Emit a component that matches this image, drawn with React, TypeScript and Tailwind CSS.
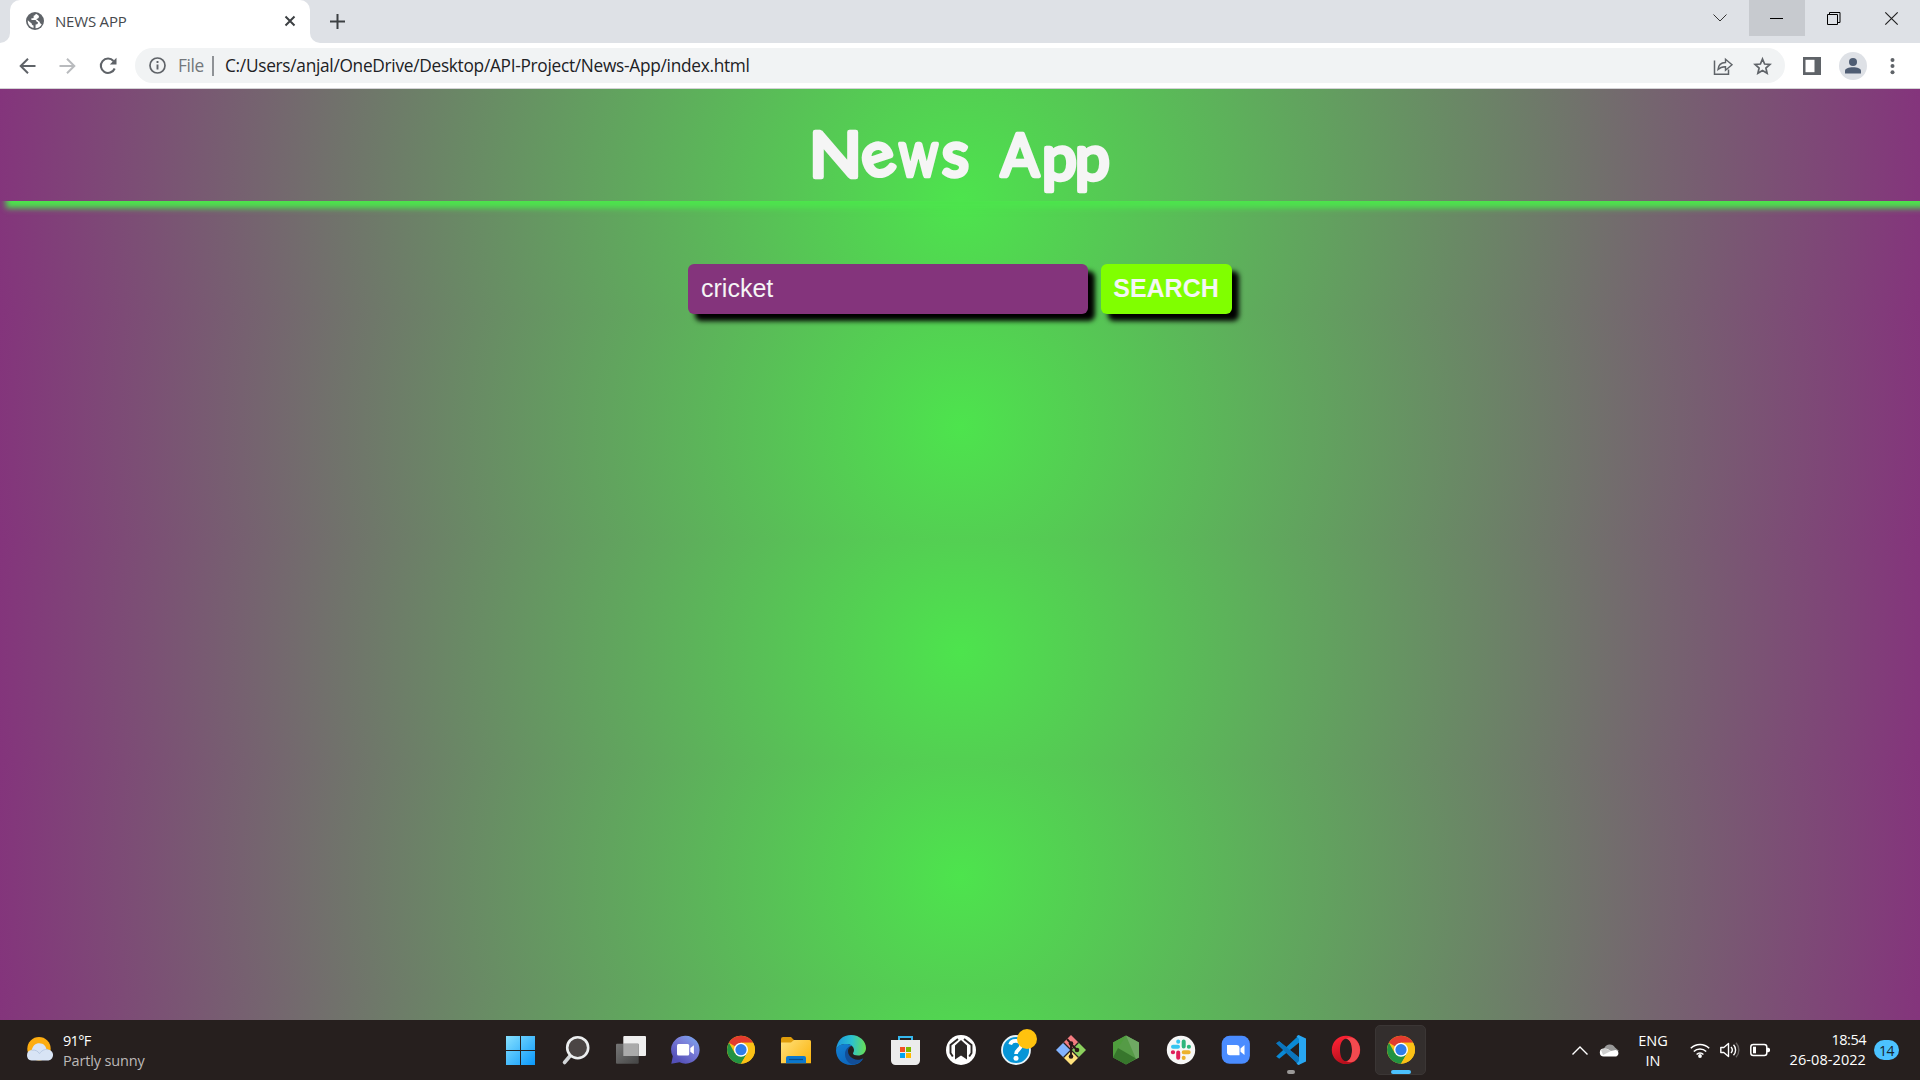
import React from "react";

type IconProps = { children: React.ReactNode; w?: number; h?: number; className?: string };

function Icon({ children, w = 31, h = 30, className = "" }: IconProps) {
  return (
    <svg width={w} height={h} viewBox={`0 0 ${w} ${h}`} fill="none" className={`block shrink-0 overflow-visible ${className}`}>
      {children}
    </svg>
  );
}

function TabStrip() {
  return (
    <div className="flex h-[43px] items-start bg-[#dee1e6]">
      <div className="flex h-[43px] w-[10px] items-end bg-white">
        <div className="h-full w-[10px] rounded-br-[10px] bg-[#dee1e6]" />
      </div>
      <div className="h-[43px] w-[300px] bg-[#dee1e6]">
        <div className="flex h-full items-start rounded-t-[10px] bg-white pt-[12px] pl-[16px]">
          <Icon w={18} h={18}>
            <circle cx="9" cy="9" r="9" fill="#5f6368" />
            <path d="M10.6 1.9C8.8 2.2 9.2 3.4 7.6 3.8 7.4 5 8.3 5.2 7.2 6.2H5.4V8H9c1.7.2 1 1.7 2.3 2.1 1.3.4.8 1.6-.2 2.1l-1.5.3-.1 3.7c2.8-.1 5-1.5 6.2-3.8-1-.7-2.2-1.3-2-2.6-1.4-.5-1.6-1.8-2.9-2-.9-.7.2-1.5 1-1.4 1.4-.1.8-1.5 1.2-2.3zM1.8 8.2c-.3 4.2 2 6.9 5.7 7.7v-2.4c-1.4-.3-1.7-.8-1.8-2C4.500 10.500 3.200 9.300 1.800 8.200z" fill="#fff" />
          </Icon>
          <span className="ml-[11px] h-[18px] w-[229px] font-['Open_Sans'] text-[15px] leading-[18px] tracking-[-0.2px] text-[#45494d]">NEWS APP</span>
          <Icon w={12} h={18}>
            <path d="M1.500 4.500l9 9m0-9l-9 9" stroke="#3c4043" strokeWidth="2" />
          </Icon>
        </div>
      </div>
      <div className="h-[43px] w-[10px] bg-white">
        <div className="h-full w-[10px] rounded-bl-[10px] bg-[#dee1e6]" />
      </div>
      <Icon w={15} h={43} className="ml-[10px]">
        <path d="M7.500 14v15M0 21.500h15" stroke="#3c4043" strokeWidth="2" />
      </Icon>
      <div className="ml-auto flex h-9">
        <div className="flex w-[59px] items-center justify-center">
          <Icon w={14} h={8}><path d="M.5.5L7 7l6.500-6.500" stroke="#333" strokeWidth="1" /></Icon>
        </div>
        <div className="flex w-14 items-center justify-center bg-[#c7cacf] pr-px">
          <div className="mt-px h-px w-[13px] bg-black" />
        </div>
        <div className="flex w-14 items-center justify-center pl-px">
          <Icon w={14} h={13} className="mt-px">
            <path d="M.5 2.500h10v10H.5zM2.500 2.500v-2h10.500v10h-2" stroke="#000" />
          </Icon>
        </div>
        <div className="flex w-[59px] items-center justify-center pl-px">
          <Icon w={13} h={13} className="mt-px"><path d="M.3.3l12.400 12.400m0-12.400L.3 12.700" stroke="#222" strokeWidth="1.200" /></Icon>
        </div>
      </div>
    </div>
  );
}

function Toolbar() {
  return (
    <div className="flex h-[46px] items-center border-b border-[#d3d2d5] bg-white pl-[19px]">
      <Icon w={17} h={18}>
        <path d="M16.500 9H2M9 1.800L1.700 9 9 16.200" stroke="#5f6368" strokeWidth="2" />
      </Icon>
      <Icon w={17} h={18} className="ml-[23px]">
        <path d="M.5 9H15M8 1.800L15.300 9 8 16.200" stroke="#b9bbbe" strokeWidth="2" />
      </Icon>
      <Icon w={18} h={18} className="ml-[23px]">
        <path d="M14.500 4A7.200 7.200 0 1 0 15.700 11.500" stroke="#5f6368" strokeWidth="2.100" />
        <path d="M17.500.800v6.700h-6.700z" fill="#5f6368" />
      </Icon>
      <div className="ml-[18px] flex h-[35px] w-[1650px] items-center rounded-full bg-[#f1f3f4] pl-[14px] font-['Open_Sans'] text-[17.3px]">
        <Icon w={17} h={17}>
          <circle cx="8.500" cy="8.500" r="7.500" stroke="#5f6368" strokeWidth="1.700" />
          <path d="M8.500 7.500v5M8.500 4v2" stroke="#5f6368" strokeWidth="1.900" />
        </Icon>
        <span className="ml-[12px] w-[34px] leading-[22px] tracking-[-0.4px] text-[#73777b]">File</span>
        <span className="h-[20px] w-[2px] bg-[#8f9296]" />
        <span className="ml-[11px] w-[540px] whitespace-nowrap leading-[22px] tracking-[-0.29px] text-[#202124]">C:/Users/anjal/OneDrive/Desktop/API-Project/News-App/index.html</span>
        <Icon w={20} h={18} className="ml-auto mt-[3px]">
          <path d="M1.500 2.500v13.700h14V11.500" stroke="#5f6368" strokeWidth="1.500" />
          <path d="M5 11.500C5.300 7.500 8 4.700 12.500 4.500V1.200L19 6.800l-6.500 5.400V8.800C9.500 8.700 7 9.500 5 11.500z" stroke="#5f6368" strokeWidth="1.400" />
        </Icon>
        <Icon w={19} h={18} className="ml-[20px] mr-[13px]">
          <path d="M9.500 2l2.100 5 5.300.500-4 3.500 1.200 5.200-4.600-2.700-4.600 2.700 1.200-5.200-4-3.500 5.300-.500z" stroke="#5f6368" strokeWidth="1.700" />
        </Icon>
      </div>
      <Icon w={18} h={18} className="ml-[18px]">
        <path d="M0 0h18v18H0z" fill="#5f6368" />
        <path d="M2.500 2.800h9v12.400h-9z" fill="#fff" />
      </Icon>
      <div className="ml-[18px] flex size-7 items-center justify-center rounded-full bg-[#dee1e6]">
        <Icon w={16} h={16}>
          <circle cx="8" cy="4" r="4" fill="#4f5d73" />
          <path d="M0 15.500V13c0-2.400 3.500-3.700 8-3.700s8 1.300 8 3.700v2.500z" fill="#4f5d73" />
        </Icon>
      </div>
      <Icon w={4} h={18} className="ml-[23px]">
        <circle cx="2.500" cy="3" r="2" fill="#5f6368" /><circle cx="2.500" cy="9" r="2" fill="#5f6368" /><circle cx="2.500" cy="15.300" r="2" fill="#5f6368" />
      </Icon>
    </div>
  );
}

function Page() {
  return (
    <main className="h-[931px] overflow-hidden bg-[radial-gradient(circle,#4de44d,#84347c)] bg-[length:1920px_225px]">
      <h1 className="h-[112px] shadow-[6px_7px_6px_#4de44d]">
        <svg width="1920" height="112" viewBox="0 0 1920 112" className="block" aria-label="News App">
          <text
            y="87"
            className="fill-[#f5f5f5] stroke-[#f5f5f5] font-['Lato'] text-[62px] font-normal"
            strokeWidth="4.500"
            strokeLinejoin="round"
          >
            <tspan x="809" y="87.500" textLength="53" lengthAdjust="spacingAndGlyphs">N</tspan>
            <tspan x="867.500" y="91" rotate="-18">e</tspan>
            <tspan x="899" y="87" textLength="39" lengthAdjust="spacingAndGlyphs">w</tspan>
            <tspan x="942">s</tspan>
            <tspan> </tspan>
            <tspan x="1001" fontSize="58" textLength="38" lengthAdjust="spacingAndGlyphs">A</tspan>
            <tspan x="1042" y="91">p</tspan>
            <tspan x="1075">p</tspan>
          </text>
        </svg>
      </h1>
      <div className="mt-[63px] flex pl-[688px] font-['Liberation_Sans'] text-[25px] text-[#f5f5f5]">
        <div className="h-[50px] w-[400px] shrink-0 rounded-[6px] bg-[#84347c] pl-[13px] leading-[49px] shadow-[7px_7px_5px_#000]">cricket</div>
        <button className="ml-[13px] h-[50px] w-[131px] shrink-0 rounded-[6px] bg-[#80ff00] pr-px pb-[2px] text-center leading-[47px] font-bold shadow-[7px_7px_5px_#000]">SEARCH</button>
      </div>
    </main>
  );
}

function ChromeLogo() {
  return (
    <Icon>
      <circle cx="16" cy="14.700" r="14" fill="#fbc116" />
      <path d="M16 14.700L3.900 7.700A14 14 0 0 1 28.100 7.700H16z" fill="#e33b2e" />
      <path d="M3.900 7.700A14 14 0 0 0 16 28.700l6.100-10.500L16 14.700 9.900 18.200z" fill="#229342" />
      <path d="M28.100 7.700H16l6.100 10.500L16 28.700A14 14 0 0 0 28.100 7.700z" fill="#fbc116" />
      <circle cx="16" cy="14.700" r="7" fill="#fff" />
      <circle cx="16" cy="14.700" r="5.600" fill="#2f7de9" />
    </Icon>
  );
}

const apps: React.ReactNode[] = [
  <Icon>
    <defs><linearGradient id="win" x1="0" y1="0" x2="30" y2="30" gradientUnits="userSpaceOnUse"><stop stopColor="#8be3ff" /><stop offset="1" stopColor="#0a98fb" /></linearGradient></defs>
    <path d="M1 1h14v14H1zM16 1h14v14H16zM1 16h14v14H1zM16 16h14v14H16z" fill="url(#win)" />
  </Icon>,
  <Icon>
    <path d="M10 21L4.500 27.500" stroke="#d2d5d8" strokeWidth="3.600" strokeLinecap="round" />
    <circle cx="17.700" cy="12.700" r="10.500" fill="#4b4544" stroke="#eceeef" strokeWidth="2.600" />
  </Icon>,
  <Icon>
    <defs><linearGradient id="tvd" x1="0" y1="9" x2="20" y2="29" gradientUnits="userSpaceOnUse"><stop stopColor="#777" /><stop offset="1" stopColor="#484848" /></linearGradient></defs>
    <rect x="8.300" y="1" width="22.700" height="20" rx="1" fill="#efefef" />
    <rect x="1" y="8.700" width="22.700" height="20" rx="1" fill="url(#tvd)" />
    <path d="M8.300 8.700h15.400V21H8.300z" fill="#aaa" />
  </Icon>,
  <Icon>
    <defs><linearGradient id="chat" x1="26" y1="2" x2="8" y2="26" gradientUnits="userSpaceOnUse"><stop stopColor="#78a4ee" /><stop offset=".4" stopColor="#7b7fd9" /><stop offset="1" stopColor="#5450b8" /></linearGradient></defs>
    <path d="M15.700.700a14 14 0 1 1-6.200 26.600L1.300 28.700l1.500-7.400A14 14 0 0 1 15.700.700z" fill="url(#chat)" />
    <rect x="7" y="9" width="12.200" height="11.600" rx="1.500" fill="#fff" />
    <path d="M20.300 13l3.600-2.700v9L20.300 16.800z" fill="#fff" />
  </Icon>,
  <ChromeLogo />,
  <Icon>
    <defs><linearGradient id="fold" x1="2" y1="5" x2="28" y2="28" gradientUnits="userSpaceOnUse"><stop stopColor="#ffe07a" /><stop offset="1" stopColor="#fbb612" /></linearGradient></defs>
    <path d="M1 4a2 2 0 0 1 2-2h8l3 3h15a2 2 0 0 1 2 2v3H1z" fill="#df9c0b" />
    <path d="M1 7.500h10l3-2.500h15a2 2 0 0 1 2 2v21.300H1z" fill="url(#fold)" />
    <path d="M6 28.300v-5.300a2 2 0 0 1 2-2h16a2 2 0 0 1 2 2v5.300z" fill="#0b78ce" />
    <path d="M9 24.500h14" stroke="#074d8c" strokeWidth="1.200" />
  </Icon>,
  <Icon>
    <defs>
      <linearGradient id="edgeA" x1="2" y1="10" x2="31" y2="12" gradientUnits="userSpaceOnUse"><stop stopColor="#1c9ade" /><stop offset=".5" stopColor="#2cc2cf" /><stop offset="1" stopColor="#69df53" /></linearGradient>
      <linearGradient id="edgeB" x1="3" y1="10" x2="14" y2="30" gradientUnits="userSpaceOnUse"><stop stopColor="#127fd2" /><stop offset="1" stopColor="#0d65bb" /></linearGradient>
    </defs>
    <path d="M1 15C2 5 8 0 16 0c9 0 15 6.500 15 13 0 5-4 7.500-8 7.500-3 0-5-.8-5-2 0-1 1-1.500 1-3.500 0-3-3-6-7.500-6C6.500 9 2.500 11 1 15z" fill="url(#edgeA)" />
    <path d="M1 15c1-4 5-6 10-6 2.500 0 4.500.500 6 2-2.500 0-5 2-5.500 5-.500 6 5 11 11 10 2-.300 4-1.200 5.500-2-3 4.500-7 6-12 6C7 30 1 23.500 1 15z" fill="url(#edgeB)" />
    <path d="M17 10.800c-4 .7-7 4-7 8.200 0 6 4 10 8 10.800 5-.8 8.500-3.800 10.500-6.800-3 2-7 2.500-10.500.500-3.500-2-5-4.500-5-7.500 0-2.500 1.800-4.500 4-5.200z" fill="#124e98" />
  </Icon>,
  <Icon>
    <path d="M9 6V1.900h13V6" stroke="#35b8ee" strokeWidth="2" />
    <path d="M1 5h29v20.500a4.500 4.500 0 0 1-4.500 4.500h-20A4.500 4.500 0 0 1 1 25.500z" fill="#ececec" />
    <path d="M10 12h5v5h-5z" fill="#f25022" /><path d="M16 12h5v5h-5z" fill="#7fba00" /><path d="M10 18h5v5h-5z" fill="#00a4ef" /><path d="M16 18h5v5h-5z" fill="#ffb900" />
  </Icon>,
  <Icon>
    <circle cx="16" cy="15" r="15" fill="#fff" />
    <path d="M10 24.500V10.500L16 5l6 5.500v14l-6-4z" fill="#2b2726" />
    <path d="M7.800 21.500L5.500 18V10l7.500-6M24.200 21.500L26.500 18V10L19 4" stroke="#2b2726" strokeWidth="1.900" />
  </Icon>,
  <Icon>
    <circle cx="16" cy="15" r="14" fill="#0695d7" stroke="#e9f5fa" strokeWidth="1.800" />
    <path d="M10.200 9.500C11.500 4.500 21 4.500 21 10.500c0 4-5 4-5 8.500" stroke="#fff" strokeWidth="3.700" />
    <circle cx="16" cy="23.200" r="2.500" fill="#fff" />
    <circle cx="27" cy="4" r="10" fill="#ffc20e" />
  </Icon>,
  <Icon>
    <path d="M8.500 7.500L16 0l7.500 7.500L16 15z" fill="#f47c80" /><path d="M1 15l7.500-7.500L16 15l-7.500 7.500z" fill="#82b3ff" />
    <path d="M16 15l7.500-7.500L31 15l-7.500 7.500z" fill="#8bd05d" /><path d="M8.500 22.500L16 15l7.500 7.500L16 30z" fill="#ffe27d" />
    <path d="M8.500 7.500l15 15M23.500 7.500l-15 15" stroke="#2a2222" strokeWidth="1.300" />
    <path d="M12 4l4 4.500V21M16 9l6 6" stroke="#2a1818" strokeWidth="1.900" />
    <circle cx="16" cy="8.500" r="2.300" fill="#2a1818" /><circle cx="16" cy="21.500" r="2.300" fill="#2a1818" /><circle cx="22" cy="15" r="2.300" fill="#2a1818" />
  </Icon>,
  <Icon>
    <path d="M16 .500l13 7v15l-13 7-13-7v-15z" fill="#559b46" />
    <path d="M16 .500L8 13l-5 9.500v-15z" fill="#4f9d3d" /><path d="M8 13l18 10.500-10 6-13-7z" fill="#37762c" /><path d="M16 .500l13 7v15l-3 1.500z" fill="#6fa863" />
  </Icon>,
  <Icon>
    <circle cx="16" cy="15" r="14.200" fill="#f7f7f7" />
    <g strokeWidth="4" strokeLinecap="round">
      <path d="M8 11.700h5M13.200 6.400v.3" stroke="#36c5f0" /><path d="M18.700 6.500v5M23.800 11.700h.2" stroke="#2eb67d" />
      <path d="M18.700 17.300h5M18.700 22.700v.2" stroke="#ecb22e" /><path d="M13.200 17.500v5.200M7.800 17.300h.3" stroke="#e01e5a" />
    </g>
  </Icon>,
  <Icon>
    <rect x="1.700" y=".800" width="28.200" height="28" rx="8" fill="#4a8cff" />
    <path d="M7 10h9.500a3 3 0 0 1 3 3v7.200H10a3 3 0 0 1-3-3z" fill="#fff" /><path d="M20.500 13.500L24.500 10v10l-4-3.200z" fill="#fff" />
  </Icon>,
  <Icon>
    <path d="M1.200 8.200l3-2 20 16.200V30z" fill="#087ac4" /><path d="M1.200 21.500l3 2.200L24.200 7.500V0z" fill="#0a89d5" />
    <path d="M1.200 8.200l3-2L24.200 22.500V30l-1.200-.800z" fill="#0b75bd" />
    <path d="M23.500 0L31 3.500v23L23.500 30l-2-1.300L24 26V4l-2.500-2.700z" fill="#28a6f1" />
  </Icon>,
  <Icon>
    <defs><linearGradient id="op" x1="5" y1="2" x2="15" y2="28" gradientUnits="userSpaceOnUse"><stop stopColor="#ff2335" /><stop offset="1" stopColor="#b60f1c" /></linearGradient></defs>
    <path d="M16 .700a14.200 14.200 0 1 0 0 28.400 14.200 14.200 0 1 0 0-28.400zm0 3c3.700 0 6 5 6 11.200s-2.300 11.200-6 11.200-6-5-6-11.200 2.300-11.200 6-11.200z" fill="url(#op)" fillRule="evenodd" />
    <path d="M16 3.700c2-1.500 6-1.500 8.500 0a14.200 14.200 0 0 1 0 22.500c-2.500 1.500-6 1.500-8.500-.100 3.700 0 6-5 6-11.200S19.700 3.700 16 3.700z" fill="#f34a4f" />
  </Icon>,
  <ChromeLogo />,
];

function AppButton({ index, children }: { index: number; children: React.ReactNode }) {
  const active = index === 16;
  return (
    <div className="flex w-[55px] justify-center">
      <div className={`flex h-[50px] w-[51px] flex-col items-center rounded-[5px] ${active ? "border border-[#3b3635] bg-[#332e2d] pt-[9px]" : "pt-[10px]"}`}>
        {children}
        {active && <div className="mt-[5px] h-1 w-5 rounded-full bg-[#4cc2ff]" />}
        {index === 14 && <div className="mt-[5px] h-1 w-2 rounded-full bg-[#9b9998]" />}
      </div>
    </div>
  );
}

function Taskbar() {
  return (
    <footer className="flex h-[60px] items-center bg-[#261f1e] font-['Open_Sans'] text-white">
      <div className="flex h-full w-[493px] pl-[26px]">
        <Icon w={28} h={24} className="mt-[17px]">
          <circle cx="13" cy="11.800" r="11.700" fill="#fdad11" />
          <path d="M5.500 23.500A5.300 5.300 0 0 1 5.700 13C7 9 9 6.300 13.500 6.300c4 0 6.500 3 7 6.200a5.500 5.500 0 0 1 2 11z" fill="#d8e4f5" />
          <path d="M5.500 13.200c4-.7 6.500 1 8 3.500 2-3 5-5 8.500-4" stroke="#b8cae4" strokeWidth="1" />
        </Icon>
        <div className="ml-[9px] pt-[11px] text-[14.500px] leading-5">
          <div className="tracking-[-0.700px]">91°F</div>
          <div className="tracking-[-0.150px] text-[#bdb9b8]">Partly sunny</div>
        </div>
      </div>
      <div className="flex h-[50px]">
        {apps.map((app, i) => <AppButton key={i} index={i}>{app}</AppButton>)}
      </div>
      <div className="flex h-full flex-1 items-center pl-[144px] text-[14.500px] leading-5">
        <Icon w={16} h={9}><path d="M.5 8.500L8 1l7.500 7.500" stroke="#fff" strokeWidth="1.400" /></Icon>
        <Icon w={20} h={14} className="ml-[12px]">
          <path d="M4 6A6 6 0 0 1 15 4.500L19 8l-8 3z" fill="#999" />
          <path d="M3.800 13.500a3.800 3.800 0 0 1 0-8c3-.5 5 1 7 2.500l5-1a3.400 3.400 0 0 1 .5 6.500z" fill="#fff" />
          <path d="M1 7c3-2.500 7-1 10 1l-8 4z" fill="#cfcfcf" />
        </Icon>
        <div className="ml-[13px] w-10 pt-px text-center"><div>ENG</div><div>IN</div></div>
        <Icon w={20} h={16} className="ml-[17px] -mt-px">
          <path d="M.8 6.300a13 13 0 0 1 18.400 0M3.800 9.500a8.700 8.700 0 0 1 12.400 0M6.600 12.500a4.800 4.800 0 0 1 6.800 0" stroke="#fff" strokeWidth="1.500" />
          <circle cx="10" cy="14" r="1.900" fill="#fff" />
        </Icon>
        <Icon w={20} h={16} className="ml-[10px]">
          <path d="M.8 5.500h3L8.500 1.500v13L3.800 10.500h-3z" stroke="#fff" strokeWidth="1.400" strokeLinejoin="round" />
          <path d="M11 5a4.500 4.500 0 0 1 0 6M13.500 2.800a7.500 7.500 0 0 1 0 10.400" stroke="#fff" strokeWidth="1.400" />
          <path d="M16 .800a10.500 10.500 0 0 1 0 14.400" stroke="#686362" strokeWidth="1.400" />
        </Icon>
        <Icon w={20} h={14} className="ml-[10px]">
          <rect x=".800" y="1.500" width="16" height="11" rx="2.500" stroke="#fff" strokeWidth="1.500" />
          <path d="M3 3.700h3v6.600H3z" fill="#fff" /><path d="M17 4.700h1.500l1.500 1v2.600l-1.500 1H17z" fill="#fff" />
        </Icon>
        <div className="-mt-px w-[96px] text-right"><div className="tracking-[-0.500px]">18:54</div><div className="tracking-[0.08px]">26-08-2022</div></div>
        <div className="ml-[8px] h-5 w-[25px] rounded-full bg-[#4cc2ff] text-center text-[14px] leading-[21px] tracking-[-0.5px] text-[#15232b]">14</div>
      </div>
    </footer>
  );
}

export default function App() {
  return (
    <div className="flex h-[1080px] w-[1920px] flex-col overflow-hidden">
      <TabStrip />
      <Toolbar />
      <Page />
      <Taskbar />
    </div>
  );
}
